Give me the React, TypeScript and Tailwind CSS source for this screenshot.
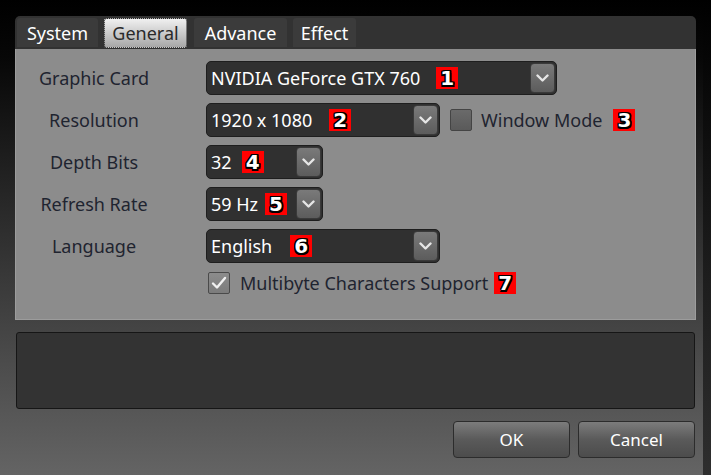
import React from "react";

const shadow =
  "[text-shadow:-1.5px_-1.5px_0_#000,1.5px_-1.5px_0_#000,-1.5px_1.5px_0_#000,1.5px_1.5px_0_#000,0_-1.5px_0_#000,0_1.5px_0_#000,-1.5px_0_0_#000,1.5px_0_0_#000]";

function Badge({ n, className = "" }: { n: string; className?: string }) {
  return (
    <span
      className={
        "inline-flex h-[22px] w-[22px] shrink-0 items-center justify-center bg-[#ff0000] font-['DejaVu_Sans',sans-serif] text-[20px] font-bold leading-none text-white " +
        shadow +
        " " +
        className
      }
    >
      {n}
    </span>
  );
}

function Chevron() {
  return (
    <svg width="13" height="9" viewBox="0 0 13 9">
      <polyline points="1.5,1.5 6.5,6.5 11.5,1.5" fill="none" stroke="#e6e6e6" strokeWidth="2.4" strokeLinecap="round" strokeLinejoin="round" />
    </svg>
  );
}

function Dropdown({ width, text, badge, gap }: { width: string; text: string; badge: string; gap: string }) {
  return (
    <div className={"flex h-[34px] items-center rounded-[5px] border border-[#1e1e1e] bg-[#303030] pl-[4px] pr-[1px] " + width}>
      <span className="whitespace-nowrap text-[18px] text-white">{text}</span>
      <Badge n={badge} className={gap} />
      <div className="ml-auto flex h-[30px] w-[25px] shrink-0 items-center justify-center rounded-[4px] border border-[#3a3a3a] bg-[linear-gradient(to_bottom,#7a7a7a,#5c5c5c)]">
        <Chevron />
      </div>
    </div>
  );
}

function Row({ label, children }: { label: string; children: React.ReactNode }) {
  return (
    <div className="flex h-[34px] items-center">
      <div className="ml-[8px] w-[140px] whitespace-nowrap text-center text-[18px] text-[#1f2430]">{label}</div>
      <div className="ml-[42px] flex items-center">{children}</div>
    </div>
  );
}

export default function App() {
  return (
    <div className="relative flex h-[475px] w-[711px] overflow-hidden bg-[linear-gradient(to_bottom,#000_0%,#070707_12%,#454545_70%,#646464_100%)] font-['Noto_Sans',sans-serif]">
      <div className="flex w-[703px] flex-col pl-[15px] pr-[7px] pt-[16px]">
        {/* Tab bar */}
        <div className="flex h-[33px] items-start gap-[6px] rounded-t-[5px] bg-[#323232] pl-[2px] pt-[2px] text-[18px] leading-none">
          <div className="flex h-[29px] w-[81px] items-center justify-center rounded-t-[3px] bg-[#3b3b3b] text-white">System</div>
          <div className="flex h-[30px] w-[83px] items-center justify-center rounded-[3px] border border-dotted border-[#222] bg-[linear-gradient(to_bottom,#f0f0f0,#a8a8a8)] text-[#2a2a2a]">
            General
          </div>
          <div className="ml-[1px] flex h-[29px] w-[93px] items-center justify-center rounded-t-[3px] bg-[#3b3b3b] text-white">Advance</div>
          <div className="flex h-[29px] w-[63px] items-center justify-center rounded-t-[3px] bg-[#3b3b3b] text-white">Effect</div>
        </div>

        {/* Content panel */}
        <div className="flex h-[271px] flex-col gap-[8px] border-x border-b border-[#9c9c9c] bg-[#8c8c8c] pt-[12px]">
          <Row label="Graphic Card">
            <Dropdown width="w-[351px]" text="NVIDIA GeForce GTX 760" badge="1" gap="ml-[16px]" />
          </Row>
          <Row label="Resolution">
            <Dropdown width="w-[234px]" text="1920 x 1080" badge="2" gap="ml-[17px]" />
            <div className="ml-[10px] h-[22px] w-[22px] rounded-[2px] border border-[#444] bg-[linear-gradient(to_bottom,#6a6a6a,#5a5a5a)]" />
            <span className="ml-[9px] whitespace-nowrap text-[18px] text-[#1f2430]">Window Mode</span>
            <Badge n="3" className="ml-[11px]" />
          </Row>
          <Row label="Depth Bits">
            <Dropdown width="w-[117px]" text="32" badge="4" gap="ml-[10px]" />
          </Row>
          <Row label="Refresh Rate">
            <Dropdown width="w-[117px]" text="59 Hz" badge="5" gap="ml-[7px]" />
          </Row>
          <Row label="Language">
            <Dropdown width="w-[234px]" text="English" badge="6" gap="ml-[18px]" />
          </Row>
          <div className="mt-[1px] flex h-[22px] items-center">
            <div className="ml-[192px] flex h-[22px] w-[22px] items-center justify-center rounded-[2px] border border-[#4a4a4a] bg-[linear-gradient(to_bottom,#8c8c8c,#7c7c7c)]">
              <svg width="16" height="14" viewBox="0 0 16 14">
                <polyline points="2,7.5 6,11.5 14,2" fill="none" stroke="#f2f2f2" strokeWidth="2.4" strokeLinecap="round" strokeLinejoin="round" />
              </svg>
            </div>
            <span className="ml-[10px] whitespace-nowrap text-[18px] text-[#1f2430]">Multibyte Characters Support</span>
            <Badge n="7" className="ml-[6px]" />
          </div>
        </div>

        {/* Message box */}
        <div className="mx-[1px] mt-[12px] h-[77px] rounded-[3px] border border-[#161616] bg-[#333]" />

        {/* Buttons */}
        <div className="mr-[1px] mt-[12px] flex justify-end gap-[8px]">
          <button className="flex h-[37px] w-[117px] items-center justify-center rounded-[4px] border border-[#2c2c2c] bg-[linear-gradient(to_bottom,#7c7c7c,#5a5a5a_50%,#4c4c4c)] text-[17px] text-white">
            OK
          </button>
          <button className="flex h-[37px] w-[117px] items-center justify-center rounded-[4px] border border-[#2c2c2c] bg-[linear-gradient(to_bottom,#7c7c7c,#5a5a5a_50%,#4c4c4c)] text-[17px] text-white">
            Cancel
          </button>
        </div>
      </div>
      <div className="w-[8px] bg-[linear-gradient(to_bottom,#000,#1e1e1e_60%,#2e2e2e)]" />
    </div>
  );
}
